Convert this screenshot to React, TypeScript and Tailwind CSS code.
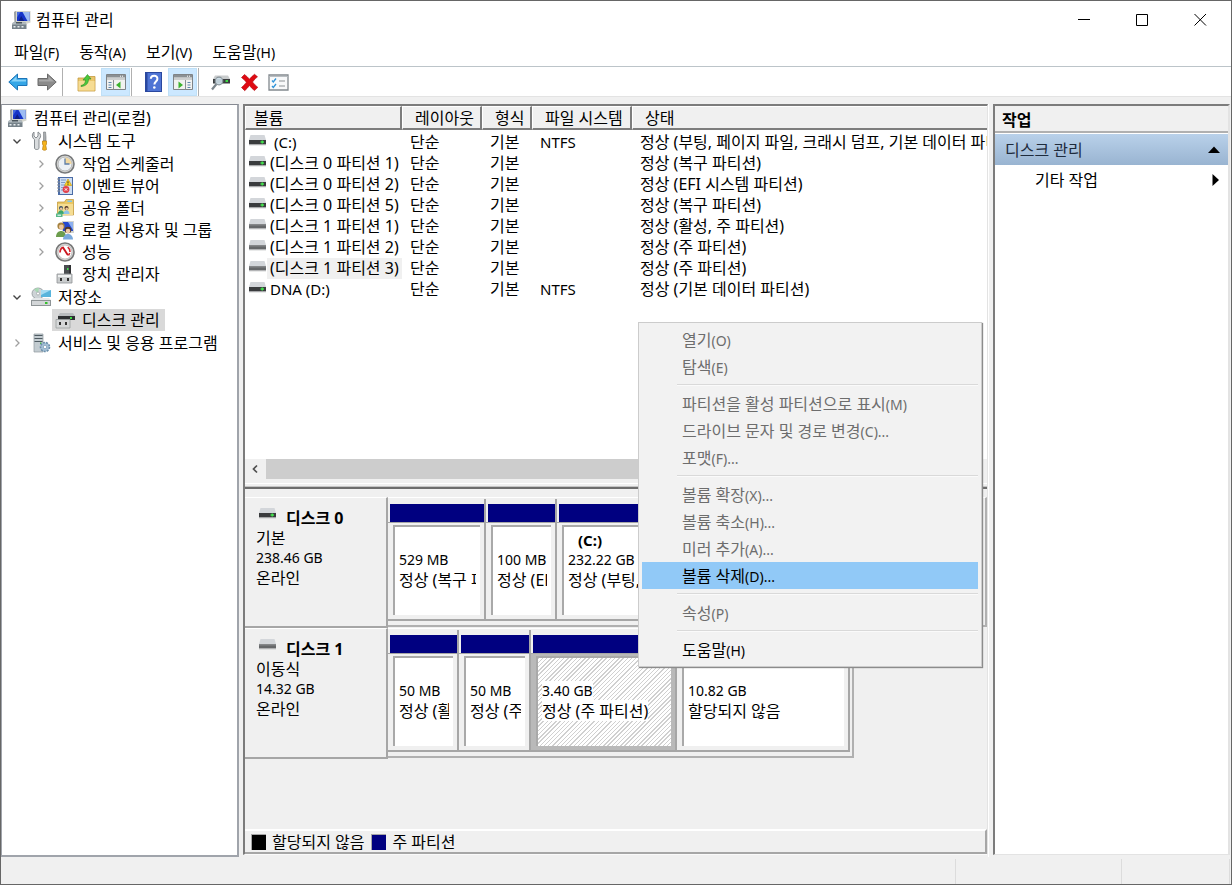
import type { ReactNode } from "react";
import clsx from "clsx";

/* ---------- icons ---------- */

function ComputerIcon() {
  return (
    <svg width="20" height="20" viewBox="0 0 20 20" className="shrink-0">
      <path d="M3 2l2-1h14.500v11.500L15 14H4z" fill="#d3d4cc" />
      <path d="M3 2l2-1v11l-1.500 1z" fill="#9da1a3" />
      <path d="M6 2h12.500v9H6z" fill="#1634c8" />
      <path d="M11.500 2h7v9h-2z" fill="#9dbcf2" />
      <path d="M6 2h3.500L6 7.500z" fill="#4468dd" />
      <path d="M7.500 11l2.700-5 3 5z" fill="#0d1f86" />
      <path d="M2 12.500h12.500l1 2v4.500H1v-4.500z" fill="#76828a" />
      <path d="M2 12.500h12.500l1 2H1z" fill="#b4bdc2" />
      <path d="M5 12h6v1.500H5z" fill="#4a555c" />
      <path d="M2.500 16h2v1.500h-2zM6.500 16h2v1.500h-2zM10.500 16h2v1.500h-2z" fill="#e6ecee" />
    </svg>
  );
}

function ToolsIcon() {
  return (
    <svg width="20" height="20" viewBox="0 0 20 20" className="shrink-0">
      <path
        d="M3 1v4l2 2 2-2V1c2 1 3 3 2.500 5L8 8.500V17c0 2-4.500 2-4.500 0V8.500C1 7 .5 3 3 1z"
        fill="#d9dcde"
        stroke="#7d8286"
        strokeWidth=".9"
      />
      <path d="M12.500 1h2l.5 5v4h-2.500V6z" fill="#a9adb0" stroke="#777b7e" strokeWidth=".6" />
      <path d="M11.500 10h4v3l-.7 1.500.7 4c-1 1-3 1-4 0l.7-4-.7-1.500z" fill="#f5b41d" stroke="#b87b0a" strokeWidth=".7" />
    </svg>
  );
}

function ClockIcon() {
  return (
    <svg width="20" height="20" viewBox="0 0 20 20" className="shrink-0">
      <circle cx="10" cy="10" r="9" fill="#dededb" stroke="#77797a" strokeWidth="1.600" />
      <circle cx="10" cy="10" r="7" fill="#edf1f5" stroke="#a6a8a9" strokeWidth=".8" />
      <path d="M10 10V3.500a6.500 6.500 0 0 1 6.500 6.500z" fill="#f3d9a0" />
      <path d="M10 4.500V10h4.500" fill="none" stroke="#5d7ea8" strokeWidth="1.300" />
    </svg>
  );
}

function EventIcon() {
  return (
    <svg width="20" height="20" viewBox="0 0 20 20" className="shrink-0">
      <path d="M3 1h15v18H3z" fill="#4b6ca6" />
      <path d="M5 2h12v16H5z" fill="#cfdef2" />
      <path d="M6 4h5M6 6.500h4M6 9h4M6 11.500h3M6 14h2" stroke="#7f9bc9" strokeWidth="1" />
      <path d="M2 3h3M2 6h3M2 9h3M2 12h3M2 15h3" stroke="#8d9299" strokeWidth="1.200" />
      <path d="M13 3l3.700 6.500H9.500z" fill="#ffd21f" stroke="#c49208" strokeWidth=".6" />
      <path d="M13 5.300v2.200M13 8.200v.8" stroke="#333" strokeWidth="1" />
      <circle cx="11" cy="13.500" r="3.400" fill="#e2404c" />
      <path d="M9.800 12.300l2.400 2.400M12.200 12.300l-2.400 2.400" stroke="#fff" strokeWidth="1" />
    </svg>
  );
}

function SharedFolderIcon() {
  return (
    <svg width="20" height="20" viewBox="0 0 20 20" className="shrink-0">
      <path d="M2.500 4h7l1.500-2.500h7.500V17h-16z" fill="#e9c765" stroke="#bf9434" strokeWidth=".7" />
      <path d="M12.500 2.500h4.500v1.500h-4.500z" fill="#7fc4ea" />
      <path d="M3 6h15v11H3z" fill="#f5dd93" />
      <circle cx="6" cy="10" r="2" fill="#35506b" />
      <circle cx="11.500" cy="10" r="2" fill="#4b2f22" />
      <circle cx="6.200" cy="10.800" r="1.300" fill="#eec79c" />
      <circle cx="11.700" cy="10.800" r="1.300" fill="#eec79c" />
      <path d="M3 16c0-5 6-5 6 0z" fill="#3ca66b" />
      <path d="M8.500 16c0-5 6-5 6 0z" fill="#8fc3e8" />
      <path d="M1 15.500h6.500V19H1z" fill="#58b98a" />
      <path d="M2.500 17.200h3.500" stroke="#fff" />
    </svg>
  );
}

function UsersIcon() {
  return (
    <svg width="20" height="20" viewBox="0 0 20 20" className="shrink-0">
      <path d="M7 1h12v12H7z" fill="#d2d4d0" />
      <path d="M8 2h10v9H8z" fill="#2448cf" />
      <path d="M13 2h5v8z" fill="#8db0ef" />
      <circle cx="6" cy="6" r="3.600" fill="#a5823f" />
      <circle cx="6.300" cy="7" r="2.400" fill="#eec79c" />
      <path d="M1 17c0-8 10-8 10 0z" fill="#6c9d4d" />
      <circle cx="13" cy="10" r="3.300" fill="#53372a" />
      <circle cx="13" cy="11" r="2.300" fill="#efcba6" />
      <path d="M8 19.500c0-7.500 10-7.500 10 0z" fill="#7aa9dc" />
    </svg>
  );
}

function PerformanceIcon() {
  return (
    <svg width="20" height="20" viewBox="0 0 20 20" className="shrink-0">
      <circle cx="10" cy="10" r="9" fill="#dcdcda" stroke="#777" strokeWidth="1.600" />
      <circle cx="10" cy="10" r="7" fill="#fff" stroke="#a0a0a0" strokeWidth=".6" />
      <path d="M5 10.500c0-2 .8-4 2.500-5M15 10c0-2-.8-3.800-2.300-4.800M13.500 13.500l1.200-2.500" fill="none" stroke="#d3222a" strokeWidth="1.600" />
      <path d="M6.500 5l2-.5 5 8-1.300 1.200z" fill="#c9141c" />
    </svg>
  );
}

function DeviceIcon() {
  return (
    <svg width="20" height="20" viewBox="0 0 20 20" className="shrink-0">
      <path d="M9 1h7v10H9z" fill="#4a4d50" />
      <path d="M14 1h2v10h-2z" fill="#2f3133" />
      <path d="M12 4h1.500v2H12z" fill="#46e050" />
      <path d="M2 10h15v9H2z" fill="#c9cccd" stroke="#8f9394" strokeWidth=".8" />
      <path d="M3 11h13v2H3z" fill="#eef0f0" />
      <path d="M5 14h2v3H5zM12 14h2v3h-2z" fill="#333" />
    </svg>
  );
}

function StorageIcon() {
  return (
    <svg width="20" height="20" viewBox="0 0 20 20" className="shrink-0">
      <ellipse cx="7" cy="6.500" rx="6" ry="5.500" fill="#cdd3d6" stroke="#8e9699" strokeWidth=".8" />
      <path d="M7 6.500L3 2.500a6 6 0 0 1 5-1.400z" fill="#a9d9b4" />
      <circle cx="7" cy="6.500" r="1.500" fill="#fff" stroke="#8e9699" strokeWidth=".6" />
      <path d="M10 3h10v7H10z" fill="#58b4dc" />
      <path d="M10 3h10l-10 5z" fill="#a4dbf2" />
      <path d="M2 11h16l2 2H0z" fill="#e4e7e9" />
      <path d="M0 13h20v6H0z" fill="#8e9496" />
      <path d="M1 14h18v4H1z" fill="#d3d6d8" />
      <path d="M14 15h2.500v2H14z" fill="#35c12c" />
    </svg>
  );
}

function DiskManagementIcon() {
  return (
    <svg width="20" height="20" viewBox="0 0 20 20" className="shrink-0">
      <path d="M5 3h13l2 3H3z" fill="#b9bcbe" />
      <path d="M3 6h17v4H3z" fill="#2e3032" />
      <path d="M15 7h2v2h-2z" fill="#3fd944" />
      <path d="M1 9.500h14v8.500H1z" fill="#d5d7d8" stroke="#9b9fa0" strokeWidth=".8" />
      <path d="M4 12h2v3H4zM10 12h2v3h-2z" fill="#333" />
    </svg>
  );
}

function ServicesIcon() {
  return (
    <svg width="20" height="20" viewBox="0 0 20 20" className="shrink-0">
      <path d="M3 1h9v18H3z" fill="#c3ccd1" stroke="#909a9f" strokeWidth=".7" />
      <path d="M3.500 2.500h8M3.500 5.500h8M3.500 8.500h8" stroke="#4f5b62" strokeWidth="1.200" />
      <path d="M9 9.500h1.500V11H9z" fill="#42bd3d" />
      <circle cx="14" cy="14" r="4.500" fill="#a4c0d6" stroke="#6b8faa" strokeWidth="1.600" strokeDasharray="2 1.100" />
      <circle cx="14" cy="14" r="1.700" fill="#fff" stroke="#6b8faa" strokeWidth=".6" />
    </svg>
  );
}

function VolumeIcon({ removable = false }: { removable?: boolean }) {
  return (
    <svg width="17" height="11" viewBox="0 0 17 11" className="mb-1 shrink-0">
      <path d="M1.500 0h14L17 5H0z" fill="#d3d6da" />
      <path d="M0 5h17v4.500H0z" fill={removable ? "#66686a" : "#3a3c3e"} />
      <path d="M0 9.500h17v.8H0z" fill="#b4b7b9" />
      {removable ? (
        <path d="M0 5h17v1.500H0z" fill="#858789" />
      ) : (
        <path d="M12.500 5.500h1.500v3h-1.500zM11.500 6.300h3.500v1.400h-3.500z" fill="#43e04d" />
      )}
    </svg>
  );
}

function Arrow({ forward = false }: { forward?: boolean }) {
  return (
    <svg width="20" height="18" viewBox="0 0 20 18" className={clsx(forward && "-scale-x-100")}>
      <path
        d="M.8 9L9.500 1v4.500H19v7H9.500V17z"
        fill={forward ? "#8b8b8b" : "#35a6e6"}
        stroke={forward ? "#6a6a6a" : "#1c74b8"}
        strokeLinejoin="round"
      />
      <path d="M3 8.500l5.500-5v3.200H18v1.800z" fill={forward ? "#a9a9a9" : "#8ad3f8"} />
    </svg>
  );
}

function FolderUpIcon() {
  return (
    <svg width="19" height="19" viewBox="0 0 19 19">
      <path d="M1 5h7l1.500-1.500H18V18H1z" fill="#eac66c" stroke="#c49b3f" strokeWidth=".8" />
      <path d="M1.500 8h16v9.500h-16z" fill="#f6dc94" />
      <path d="M4 12.500c3-.5 4.500-2.500 4.500-5.500H6l4.500-5.500L14 6h-2.500c0 4.500-2.500 7-7.500 7.500z" fill="#4cc83c" stroke="#2d8f25" strokeWidth=".6" />
    </svg>
  );
}

function PaneIcon({ flipped = false }: { flipped?: boolean }) {
  return (
    <svg width="20" height="18" viewBox="0 0 20 18">
      <path d="M.5 1.500h19v15H.5z" fill="#f2f2f0" stroke="#7f8386" />
      <path d="M1 2h18v2.500H1z" fill="#8b9094" />
      <path d="M14 3.200h1M16 3.200h1" stroke="#fff" />
      <path d="M1 6h18" stroke="#a7abae" />
      {flipped ? (
        <>
          <path d="M12.500 7v9.500" stroke="#8b9094" />
          <path d="M5.500 8.500l4.500 3.500-4.500 3.500z" fill="#3db32e" />
          <path d="M14.500 9.500h3M14.500 12h3M14.500 14.500h3" stroke="#5c86ac" />
        </>
      ) : (
        <>
          <path d="M7.500 7v9.500" stroke="#8b9094" />
          <path d="M14.500 8.500L10 12l4.500 3.500z" fill="#3db32e" />
          <path d="M2.500 9.500h3M2.500 12h3M2.500 14.500h3" stroke="#5c86ac" />
        </>
      )}
    </svg>
  );
}

function HelpIcon() {
  return (
    <svg width="17" height="20" viewBox="0 0 17 20">
      <path d="M0 0h17v20H0z" fill="#2a489f" />
      <path d="M2.500 1H16v18H2.500z" fill="#4f74d4" />
      <path d="M5.800 6.700c.2-4 6.800-3.800 6.600.2-.1 2.600-3 2.700-3 5.600" fill="none" stroke="#fff" strokeWidth="2" />
      <circle cx="9.300" cy="15.500" r="1.300" fill="#fff" />
    </svg>
  );
}

function InspectIcon() {
  return (
    <svg width="20" height="18" viewBox="0 0 20 18">
      <path d="M4 2.500h13l2 3.500H2z" fill="#c9cccd" />
      <path d="M2 6h17v4.500H2z" fill="#3b3e40" />
      <path d="M14.500 7h2.500v2h-2.500z" fill="#3fd944" />
      <path d="M5.500 11L1 16.500" stroke="#7b858c" strokeWidth="2.200" />
      <circle cx="8" cy="8" r="3.800" fill="#cfe0ea" fillOpacity=".9" stroke="#89949b" strokeWidth="1.200" />
    </svg>
  );
}

function DeleteIcon() {
  return (
    <svg width="19" height="19" viewBox="0 0 19 19">
      <path d="M1.500 4.500L4.500 1.500c2 1.500 3.500 3 5 4.700 1.500-1.900 3-3.400 5-4.900l3 2.500c-2 1.500-3.600 3.200-5 5.200 1.600 2 3.400 3.900 5.300 5.300l-3.300 3.300c-2-1.500-3.600-3.200-5-5.100-1.500 2-3 3.600-4.800 5.200L1.500 14.500c2-1.600 3.500-3.300 4.900-5.300-1.400-1.800-3-3.300-4.900-4.700z" fill="#df0a12" stroke="#b00208" strokeWidth=".6" />
    </svg>
  );
}

function ListIcon() {
  return (
    <svg width="21" height="17" viewBox="0 0 21 17">
      <path d="M1 1h19v15H1z" fill="#f8f9fa" stroke="#82898e" strokeWidth="1.300" />
      <path d="M1.500 2.500h18" stroke="#b9bec2" />
      <path d="M4 6.500l1.300 1.500L8 4.500M4 12l1.300 1.500L8 10" fill="none" stroke="#2f93d8" strokeWidth="1.300" />
      <path d="M11 7h6M11 12h6" stroke="#8d9295" />
    </svg>
  );
}

function Chevron({ open }: { open: boolean }) {
  return (
    <svg width="16" height="16" viewBox="0 0 16 16" className="shrink-0">
      {open ? (
        <path d="M4.500 6.500L8 10l3.500-3.500" fill="none" stroke="#444" strokeWidth="1.400" />
      ) : (
        <path d="M6.500 4.500L10 8l-3.500 3.500" fill="none" stroke="#a0a0a0" strokeWidth="1.300" />
      )}
    </svg>
  );
}

/* ---------- title, menu and tool bars ---------- */

// Label with its access key in the smaller Latin face, e.g. 파일(F)
function Label({ text, accessKey, more }: { text: string; accessKey: string; more?: boolean }) {
  return (
    <>
      {text}
      <span className="text-sm">
        ({accessKey}){more && "..."}
      </span>
    </>
  );
}

const menus = [
  { text: "파일", key: "F" },
  { text: "동작", key: "A" },
  { text: "보기", key: "V" },
  { text: "도움말", key: "H" },
];

function TitleBar() {
  return (
    <header className="flex h-[37px] shrink-0 items-center pr-[2px] pl-[10px]">
      <ComputerIcon />
      <h1 className="flex-1 pl-[5px]">컴퓨터 관리</h1>
      <div className="flex h-full">
        <button aria-label="최소화" className="flex w-[58px] items-center justify-center">
          <svg width="13" height="13" viewBox="0 0 13 13">
            <path d="M0 6.500h12" stroke="#000" />
          </svg>
        </button>
        <button aria-label="최대화" className="flex w-[58px] items-center justify-center">
          <svg width="13" height="13" viewBox="0 0 13 13">
            <path d="M.5 1.500h11v11H.5z" fill="none" stroke="#000" />
          </svg>
        </button>
        <button aria-label="닫기" className="flex w-[58px] items-center justify-center">
          <svg width="13" height="13" viewBox="0 0 13 13">
            <path d="M.5 1l11.500 11.500M12 1L.5 12.500" stroke="#000" />
          </svg>
        </button>
      </div>
    </header>
  );
}

function MenuBar() {
  return (
    <nav className="flex h-[29px] shrink-0 items-center border-b border-[#bcc4c9] pt-px pl-[3px]">
      {menus.map((m) => (
        <button key={m.key} className="px-[10px]">
          <Label text={m.text} accessKey={m.key} />
        </button>
      ))}
    </nav>
  );
}

function ToolButton({ label, active, children }: { label: string; active?: boolean; children: ReactNode }) {
  return (
    <button
      aria-label={label}
      className={clsx("flex h-7 w-[29px] items-center justify-center", active && "border border-[#bfe0f7] bg-[#cce8ff]")}
    >
      {children}
    </button>
  );
}

function Divider() {
  return <span className="mx-px h-7 w-px bg-[#b0b0b0]" />;
}

function ToolBar() {
  return (
    <div className="flex h-[30px] shrink-0 items-center border-b border-[#e3e3e3] pt-px pl-[2px]">
      <ToolButton label="뒤로">
        <Arrow />
      </ToolButton>
      <ToolButton label="앞으로">
        <Arrow forward />
      </ToolButton>
      <Divider />
      <div className="flex pl-2">
        <ToolButton label="위로">
          <FolderUpIcon />
        </ToolButton>
        <ToolButton label="콘솔 트리 표시/숨기기" active>
          <PaneIcon />
        </ToolButton>
      </div>
      <Divider />
      <div className="flex pl-[6px]">
        <ToolButton label="도움말">
          <HelpIcon />
        </ToolButton>
        <ToolButton label="작업 창 표시/숨기기" active>
          <PaneIcon flipped />
        </ToolButton>
      </div>
      <Divider />
      <div className="flex pl-[6px]">
        <ToolButton label="설정">
          <InspectIcon />
        </ToolButton>
        <ToolButton label="삭제">
          <DeleteIcon />
        </ToolButton>
        <ToolButton label="목록">
          <ListIcon />
        </ToolButton>
      </div>
    </div>
  );
}

/* ---------- console tree ---------- */

type TreeNode = {
  label: string;
  icon: ReactNode;
  expandable?: boolean;
  selected?: boolean;
  children?: TreeNode[];
};

const tree: TreeNode[] = [
  {
    label: "시스템 도구",
    icon: <ToolsIcon />,
    expandable: true,
    children: [
      { label: "작업 스케줄러", icon: <ClockIcon />, expandable: true },
      { label: "이벤트 뷰어", icon: <EventIcon />, expandable: true },
      { label: "공유 폴더", icon: <SharedFolderIcon />, expandable: true },
      { label: "로컬 사용자 및 그룹", icon: <UsersIcon />, expandable: true },
      { label: "성능", icon: <PerformanceIcon />, expandable: true },
      { label: "장치 관리자", icon: <DeviceIcon /> },
    ],
  },
  {
    label: "저장소",
    icon: <StorageIcon />,
    expandable: true,
    children: [{ label: "디스크 관리", icon: <DiskManagementIcon />, selected: true }],
  },
  { label: "서비스 및 응용 프로그램", icon: <ServicesIcon />, expandable: true },
];

function TreeItem({ node }: { node: TreeNode }) {
  return (
    <li>
      <div className="flex h-[22px] items-center">
        <span className="mr-[3px] w-4">{node.expandable && <Chevron open={!!node.children} />}</span>
        <button
          className={clsx("flex h-[22px] items-center gap-[7px] pl-[3px] pr-[5px] whitespace-nowrap", node.selected && "bg-[#d9d9d9]")}
        >
          {node.icon}
          {node.label}
        </button>
      </div>
      {node.children && (
        <ul className="py-px pl-6">
          {node.children.map((child) => (
            <TreeItem key={child.label} node={child} />
          ))}
        </ul>
      )}
    </li>
  );
}

function ConsoleTree() {
  return (
    <aside className="w-[238px] shrink-0 overflow-hidden border border-r-2 border-b-2 border-[#a0a4ab] border-t-[#868a92] bg-white pt-[2px]">
      <button className="flex h-[22px] items-center gap-[7px] pl-[5px]">
        <ComputerIcon />
        컴퓨터 관리(로컬)
      </button>
      <ul className="pt-px pl-[7px]">
        {tree.map((node) => (
          <TreeItem key={node.label} node={node} />
        ))}
      </ul>
    </aside>
  );
}

/* ---------- volume list ---------- */

const volumes = [
  { name: "(C:)", fs: "NTFS", status: "정상 (부팅, 페이지 파일, 크래시 덤프, 기본 데이터 파티션)", latin: true, indent: true },
  { name: "(디스크 0 파티션 1)", status: "정상 (복구 파티션)" },
  { name: "(디스크 0 파티션 2)", status: "정상 (EFI 시스템 파티션)" },
  { name: "(디스크 0 파티션 5)", status: "정상 (복구 파티션)" },
  { name: "(디스크 1 파티션 1)", status: "정상 (활성, 주 파티션)", removable: true },
  { name: "(디스크 1 파티션 2)", status: "정상 (주 파티션)", removable: true },
  { name: "(디스크 1 파티션 3)", status: "정상 (주 파티션)", removable: true, selected: true },
  { name: "DNA (D:)", fs: "NTFS", status: "정상 (기본 데이터 파티션)", latin: true },
];

const columns = [
  { label: "볼륨", width: "w-[157px]", pad: "pl-2" },
  { label: "레이아웃", width: "w-20", pad: "pl-3" },
  { label: "형식", width: "w-[50px]", pad: "pl-3" },
  { label: "파일 시스템", width: "w-[100px]", pad: "pl-3" },
  { label: "상태", width: "", pad: "pl-3" },
];

function VolumeList() {
  return (
    <section className="flex h-[381px] shrink-0 flex-col bg-white">
      <div className="flex-1 overflow-hidden">
        <table className="w-full table-fixed border-separate border-spacing-0 text-left whitespace-nowrap">
          <thead>
            <tr>
              {columns.map((c) => (
                <th
                  key={c.label}
                  className={clsx(
                    "h-6 border-t border-r-2 border-b-2 border-l border-t-white border-r-[#7d7d7d] border-b-[#7d7d7d] border-l-white bg-[#f0f0f0] font-normal last:border-r-0",
                    c.width,
                    c.pad,
                  )}
                >
                  {c.label}
                </th>
              ))}
            </tr>
          </thead>
          <tbody className="before:block before:h-[2px]">
            {volumes.map((v) => (
              <tr key={v.name} className="h-[21px] leading-[21px]">
                <td>
                  <div className="flex items-center gap-px pl-1">
                    <VolumeIcon removable={v.removable} />
                    <span
                      className={clsx(
                        "px-[3px]",
                        v.selected && "bg-[#f0f0f0]",
                        v.latin && "text-[15px]",
                        v.indent && "ml-1",
                      )}
                    >
                      {v.name}
                    </span>
                  </div>
                </td>
                <td className="pl-2">단순</td>
                <td className="pl-2">기본</td>
                <td className="pl-2 text-[15px]">{v.fs}</td>
                <td className="overflow-hidden pl-2">{v.status}</td>
              </tr>
            ))}
          </tbody>
        </table>
      </div>
      {/* horizontal scroll bar */}
      <div className="flex h-5 bg-[#f0f0f0]">
        <button aria-label="왼쪽으로 스크롤" className="flex w-[21px] items-center justify-center">
          <svg width="8" height="10" viewBox="0 0 8 10">
            <path d="M5 1.500L1.500 5 5 8.500" fill="none" stroke="#505050" strokeWidth="1.700" />
          </svg>
        </button>
        <div className="mr-[21px] flex-1 bg-[#cdcdcd]" />
      </div>
      <div className="h-2 border-b border-[#c4c4c4] bg-[#f0f0f0] pt-1">
        <div className="h-px bg-white" />
      </div>
    </section>
  );
}

/* ---------- graphical view ---------- */

type Partition = {
  name?: string;
  size: string;
  status: string;
  width: string;
  selected?: boolean;
  unallocated?: boolean;
};

const disks = [
  {
    name: "디스크 0",
    kind: "기본",
    size: "238.46 GB",
    state: "온라인",
    width: "flex-1",
    partitions: [
      { size: "529 MB", status: "정상 (복구 파티션)", width: "w-[98px]" },
      { size: "100 MB", status: "정상 (EFI 시스템 파티션)", width: "w-[71px]" },
      { name: "(C:)", size: "232.22 GB", status: "정상 (부팅,", width: "flex-1" },
    ] as Partition[],
  },
  {
    name: "디스크 1",
    kind: "이동식",
    size: "14.32 GB",
    state: "온라인",
    width: "",
    removable: true,
    partitions: [
      { size: "50 MB", status: "정상 (활성, 주 파티션)", width: "w-[71px]" },
      { size: "50 MB", status: "정상 (주 파티션)", width: "w-[72px]" },
      { size: "3.40 GB", status: "정상 (주 파티션)", width: "w-[146px]", selected: true },
      { size: "10.82 GB", status: "할당되지 않음", width: "w-[173px]", unallocated: true },
    ] as Partition[],
  },
];

function PartitionBox({ p }: { p: Partition }) {
  const mark = p.selected && "bg-white";
  return (
    <div className={clsx("flex shrink-0 flex-col border-r-2 border-b-2 border-[#a6a6a6]", p.width)}>
      <div className={clsx("mt-[5px] ml-[2px] h-[18px]", p.unallocated ? "bg-black" : "bg-[#000080]")} />
      <div className={clsx("flex flex-1 flex-col border-t border-[#a6a6a6] p-1 pt-[2px] pl-[5px]", p.selected && "bg-[#b9b9b9]")}>
        <div
          className={clsx(
            "flex-1 border-t-2 border-l-2 border-[#a9a9a9] pr-1 pl-1",
            p.selected ? "bg-[repeating-linear-gradient(135deg,#d0d0d0_0_1px,#fff_1px_3px)]" : "bg-white",
          )}
        >
          <div className="overflow-hidden pt-[3px] leading-5 whitespace-nowrap">
            <p className="h-5 pl-[10px] text-[15px] font-bold">{p.name}</p>
            <p className="text-sm leading-5">
              <span className={clsx(mark)}>{p.size}</span>
            </p>
            <p>
              <span className={clsx(mark)}>{p.status}</span>
            </p>
          </div>
        </div>
      </div>
    </div>
  );
}

function DiskView() {
  return (
    <section className="flex min-h-0 flex-1 flex-col border-t-2 border-[#6d6d6d] bg-[#f0f0f0]">
      <div className="flex-1 pt-2">
        {disks.map((d) => (
          <div key={d.name} className="flex h-[131px]">
            <div className="w-[143px] shrink-0 border-t border-r-2 border-b-2 border-t-white border-r-[#a6a6a6] border-b-[#a6a6a6] pt-[10px] pl-[11px] leading-5">
              <h2 className="flex gap-[10px] pl-[3px] font-bold">
                <VolumeIcon removable={d.removable} />
                {d.name}
              </h2>
              <p>{d.kind}</p>
              <p className="text-sm leading-5">{d.size}</p>
              <p>{d.state}</p>
            </div>
            <div
              className={clsx(
                "mb-px flex min-w-0 border-t border-r-2 border-b-2 border-t-white border-r-[#b0b0b0] border-b-[#b0b0b0] pt-px pr-[2px] pb-1",
                d.width,
              )}
            >
              {d.partitions.map((p, i) => (
                <PartitionBox key={i} p={p} />
              ))}
            </div>
          </div>
        ))}
      </div>
      {/* legend */}
      <footer className="flex h-[25px] items-center border-t-2 border-r-2 border-b-2 border-t-white border-r-[#a6a6a6] border-b-[#a6a6a6] pl-[6px]">
        <span className="h-4 w-[15px] border-t border-l border-[#a6a6a6] bg-black" />
        <span className="pl-[6px]">할당되지 않음</span>
        <span className="ml-[7px] h-4 w-[15px] border-t border-l border-[#a6a6a6] bg-[#000080]" />
        <span className="pl-[6px]">주 파티션</span>
      </footer>
    </section>
  );
}

/* ---------- actions pane ---------- */

function ActionsPane() {
  return (
    <aside className="mb-[2px] w-[237px] shrink-0 border-t-2 border-r-2 border-b border-l-2 border-t-[#7c7c7c] border-r-[#e3e3e3] border-b-[#e3e3e3] border-l-[#7c7c7c] bg-white">
      <h2 className="h-[27px] border-b-2 border-[#b0b0b0] bg-[#f0f0f0] pl-[7px] leading-[28px] font-bold">작업</h2>
      <button className="mt-px flex h-[31px] w-full items-center justify-between bg-linear-to-b from-[#b9d1ea] to-[#99b4d1] pr-2 pl-[10px] text-[#1e2b3c]">
        디스크 관리
        <svg width="12" height="7" viewBox="0 0 12 7">
          <path d="M6 .5L12 7H0z" fill="#000" />
        </svg>
      </button>
      <button className="flex h-[30px] w-full items-center justify-between pr-2 pl-10">
        기타 작업
        <svg width="8" height="12" viewBox="0 0 8 12">
          <path d="M.5 0L7 6 .5 12z" fill="#000" />
        </svg>
      </button>
    </aside>
  );
}

/* ---------- context menu ---------- */

type MenuEntry = { text: string; key: string; more?: boolean; enabled?: boolean; active?: boolean };

const contextMenu: MenuEntry[][] = [
  [
    { text: "열기", key: "O" },
    { text: "탐색", key: "E" },
  ],
  [
    { text: "파티션을 활성 파티션으로 표시", key: "M" },
    { text: "드라이브 문자 및 경로 변경", key: "C", more: true },
    { text: "포맷", key: "F", more: true },
  ],
  [
    { text: "볼륨 확장", key: "X", more: true },
    { text: "볼륨 축소", key: "H", more: true },
    { text: "미러 추가", key: "A", more: true },
    { text: "볼륨 삭제", key: "D", more: true, enabled: true, active: true },
  ],
  [{ text: "속성", key: "P" }],
  [{ text: "도움말", key: "H", enabled: true }],
];

function ContextMenu() {
  return (
    <div
      role="menu"
      className="absolute top-[321px] left-[637px] w-[344px] border border-[#cccccc] bg-[#f2f2f2] p-[3px] shadow-[1px_1px_1px_#8c8c8c]"
    >
      {contextMenu.map((group, i) => (
        <div key={i}>
          {i > 0 && <div className="my-1 ml-[35px] h-[2px] border-t border-b border-t-[#d9d9d9] border-b-[#fafafa]" />}
          {group.map((item) => (
            <button
              key={item.key}
              role="menuitem"
              disabled={!item.enabled}
              className={clsx(
                "block h-[27px] w-full pl-10 text-left leading-[28px]",
                item.active && "bg-[#91c9f7]",
                !item.enabled && "text-[#6d6d6d]",
              )}
            >
              <Label text={item.text} accessKey={item.key} more={item.more} />
            </button>
          ))}
        </div>
      ))}
    </div>
  );
}

export default function App() {
  return (
    <div className="relative flex h-screen flex-col overflow-hidden border border-[#666666] bg-white font-['Noto_Sans','Noto_Sans_CJK_KR',sans-serif] text-base leading-5 text-black">
      <TitleBar />
      <MenuBar />
      <ToolBar />
      <main className="flex min-h-0 flex-1 bg-[#f0f0f0] pt-[7px] pr-px">
        <ConsoleTree />
        <div className="mb-[2px] ml-1 flex min-w-0 flex-1 flex-col border-t-2 border-r border-b border-l-2 border-t-[#7c7c7c] border-r-[#e3e3e3] border-b-[#fafafa] border-l-[#7c7c7c]">
          <VolumeList />
          <DiskView />
        </div>
        <div className="w-[5px] border-l border-white" />
        <ActionsPane />
      </main>
      <footer className="flex h-[27px] shrink-0 bg-[#f0f0f0] pt-[2px]">
        <div className="flex-1 border-r border-[#dcdcdc]" />
        <div className="w-[166px] border-r border-[#dcdcdc]" />
        <div className="mr-px w-[108px] border-r border-[#dcdcdc]" />
      </footer>
      <ContextMenu />
    </div>
  );
}
